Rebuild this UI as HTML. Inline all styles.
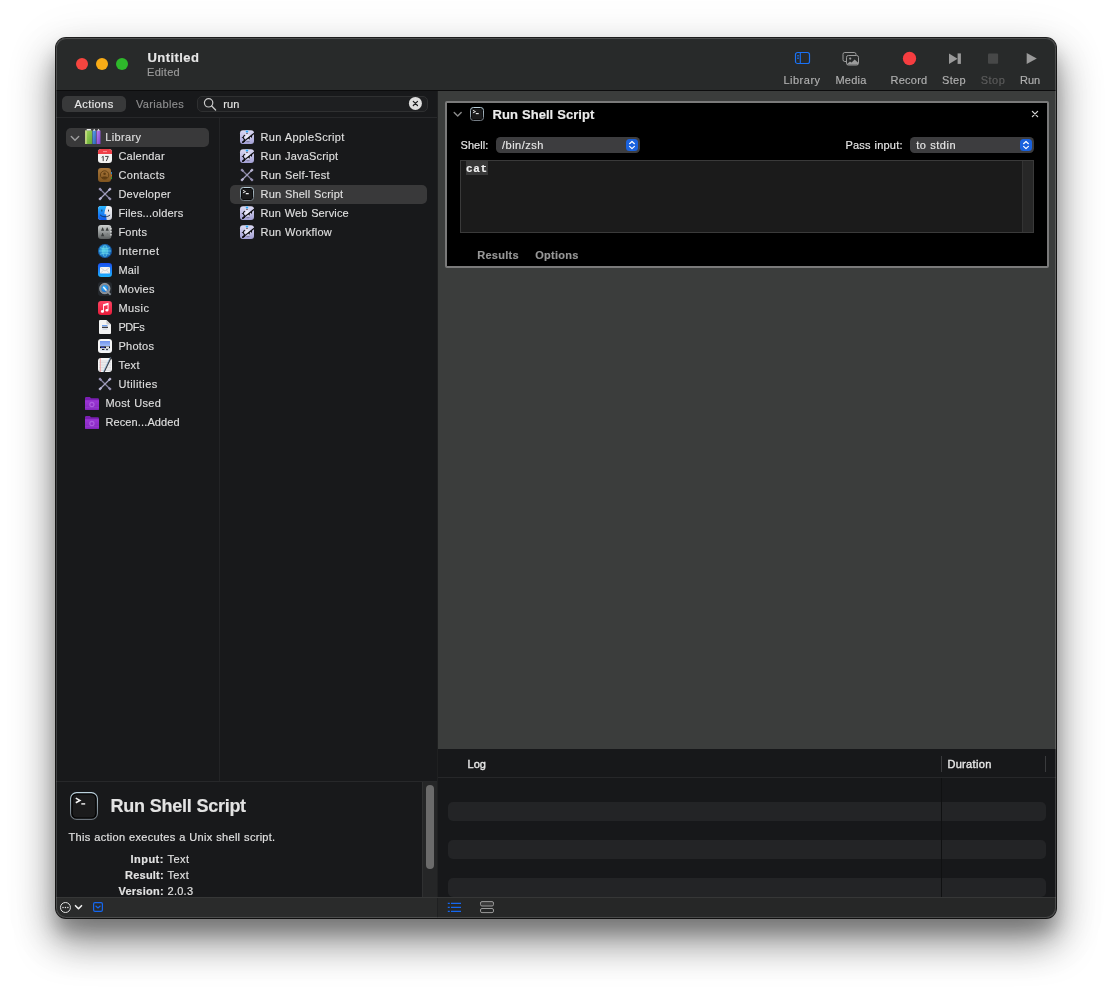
<!DOCTYPE html>
<html>
<head>
<meta charset="utf-8">
<title>Automator</title>
<style>
*{box-sizing:border-box;margin:0;padding:0}
html,body{width:1112px;height:992px;overflow:hidden;background:#fff}
body{font-family:"Liberation Sans",sans-serif;font-size:11px;color:#e2e2e2;position:relative;-webkit-text-stroke:0.16px;word-spacing:0.4px}
.abs{position:absolute}
#win{will-change:transform;position:absolute;left:56px;top:38px;width:1000px;height:880px;border-radius:10px;background:#18191b;overflow:hidden}
#shadow{position:absolute;left:56px;top:38px;width:1000px;height:880px;border-radius:10px;
 box-shadow:0 0 0 1px rgba(0,0,0,.88),0 24px 38px 2px rgba(0,0,0,.38),0 14px 18px rgba(0,0,0,.22),0 12px 50px 8px rgba(0,0,0,.09)}
#win>*{position:absolute}
#win svg{position:absolute;overflow:visible}
.tl{width:12px;height:12px;border-radius:50%;top:20px}
.t{white-space:nowrap;line-height:14px;height:14px}
.tbi{top:35px;text-align:center;color:#b0b0b0;width:60px;margin-left:-30px}
.row{height:19px;border-radius:5px;background:#39393a}
.it{white-space:nowrap;line-height:19px;height:19px;color:#dfdfdf}
.ic{width:14px;height:14px}
.b{font-weight:bold}
svg text{-webkit-text-stroke:0 transparent}
.stripe{left:392px;width:598px;height:19px;border-radius:5px;background:#232426}
.pop{height:16px;border-radius:4.5px;background:#3d3d3f}
.popb{width:12px;height:12px;border-radius:3.5px;background:#1a62de}
</style>
</head>
<body>
<svg width="0" height="0" style="position:absolute;left:0;top:0">
<defs>
<linearGradient id="gGreen" x1="0" y1="0" x2="1" y2="1"><stop offset="0" stop-color="#a5d860"/><stop offset="1" stop-color="#62a733"/></linearGradient>
<linearGradient id="gBlue" x1="0" y1="0" x2="1" y2="1"><stop offset="0" stop-color="#5fa2ea"/><stop offset="1" stop-color="#2b62b4"/></linearGradient>
<linearGradient id="gPurple" x1="0" y1="0" x2="1" y2="1"><stop offset="0" stop-color="#bd85f5"/><stop offset="1" stop-color="#7d3fc8"/></linearGradient>
<linearGradient id="gBrown" x1="0" y1="0" x2="0" y2="1"><stop offset="0" stop-color="#a8763a"/><stop offset="1" stop-color="#80551f"/></linearGradient>
<linearGradient id="gFinder" x1="0" y1="0" x2="0" y2="1"><stop offset="0" stop-color="#2ab6ff"/><stop offset="1" stop-color="#0c58ea"/></linearGradient>
<linearGradient id="gFinderR" x1="0" y1="0" x2="0" y2="1"><stop offset="0" stop-color="#f4f4f8"/><stop offset="1" stop-color="#cfd2dc"/></linearGradient>
<linearGradient id="gFonts" x1="0" y1="0" x2="0" y2="1"><stop offset="0" stop-color="#cdd1d1"/><stop offset="1" stop-color="#5c6060"/></linearGradient>
<radialGradient id="gGlobe" cx="0.45" cy="0.45" r="0.6"><stop offset="0" stop-color="#4fd2e6"/><stop offset="0.6" stop-color="#2487d0"/><stop offset="1" stop-color="#134f9c"/></radialGradient>
<linearGradient id="gMail" x1="0" y1="0" x2="0" y2="1"><stop offset="0" stop-color="#1a4ff0"/><stop offset="1" stop-color="#1fb4ff"/></linearGradient>
<radialGradient id="gQT" cx="0.45" cy="0.4" r="0.6"><stop offset="0" stop-color="#3cc0ff"/><stop offset="1" stop-color="#0e5ccc"/></radialGradient>
<linearGradient id="gMusic" x1="0" y1="0" x2="0" y2="1"><stop offset="0" stop-color="#fc4463"/><stop offset="1" stop-color="#e81c3a"/></linearGradient>
<linearGradient id="gSky" x1="0" y1="0" x2="0" y2="1"><stop offset="0" stop-color="#7193ee"/><stop offset="1" stop-color="#a4c0f8"/></linearGradient>
<linearGradient id="gFolder" x1="0" y1="0" x2="0" y2="1"><stop offset="0" stop-color="#9c36d6"/><stop offset="1" stop-color="#8427bd"/></linearGradient>
<linearGradient id="gAuto" x1="0" y1="0" x2="0" y2="1"><stop offset="0" stop-color="#dcdaf4"/><stop offset="1" stop-color="#a29fd4"/></linearGradient>
<radialGradient id="gGlow" cx="0.5" cy="0.5" r="0.5"><stop offset="0" stop-color="#fff" stop-opacity="0.85"/><stop offset="1" stop-color="#fff" stop-opacity="0"/></radialGradient>
<linearGradient id="gTer" x1="0" y1="0" x2="0" y2="1"><stop offset="0" stop-color="#b8ced9"/><stop offset="1" stop-color="#737b83"/></linearGradient>
<linearGradient id="gTool" x1="0" y1="0" x2="0" y2="1"><stop offset="0" stop-color="#c9c5e2"/><stop offset="1" stop-color="#8f89b8"/></linearGradient>

<!-- library books 16x15 -->
<g id="i-lib">
 <rect x="0.300" y="1.200" width="6.800" height="13.800" fill="url(#gGreen)"/><rect x="0.300" y="1.200" width="1" height="13.800" fill="#f3f5a8"/><rect x="1.500" y="-0.100" width="4.600" height="1.500" rx="0.500" fill="#efefef"/>
 <rect x="7.500" y="1.400" width="3.500" height="13.600" fill="url(#gBlue)"/><path d="M7.900 1.600l1.350-2 1.350 2z" fill="#f2f2f2"/>
 <rect x="11.600" y="1.400" width="4" height="13.600" fill="url(#gPurple)"/><path d="M12.200 1.600l1.400-2 1.400 2z" fill="#f2f2f2"/>
</g>
<!-- calendar -->
<g id="i-cal">
 <rect width="14" height="14" rx="3.2" fill="#f3f3f3"/>
 <path d="M0 3.2A3.2 3.2 0 0 1 3.2 0h7.6A3.2 3.2 0 0 1 14 3.2V5H0z" fill="#ef3f48"/>
 <rect x="5" y="2.2" width="4" height="0.9" fill="#f9a0a4"/>
 <path d="M3.700 8.400L5.200 7.300V12.100M7.100 7.400H10.300L8.300 12.100" fill="none" stroke="#3a3a3a" stroke-width="0.950" stroke-linejoin="round"/>
</g>
<!-- contacts -->
<g id="i-con">
 <rect x="12" y="4" width="1.8" height="2.4" fill="#3aa0f0"/><rect x="12" y="6.4" width="1.8" height="2.4" fill="#f08a20"/><rect x="12" y="8.8" width="1.8" height="2.4" fill="#40b840"/>
 <rect width="13" height="14" rx="3" fill="url(#gBrown)"/>
 <circle cx="6.6" cy="7" r="4.2" fill="none" stroke="#5e3c12" stroke-width="0.9"/>
 <circle cx="6.6" cy="5.8" r="1.3" fill="#5e3c12"/>
 <path d="M3.6 9.6c.6-1.6 5.4-1.6 6 0c-1.4 1.8-4.6 1.8-6 0z" fill="#5e3c12"/>
</g>
<!-- tools X -->
<g id="i-tool" stroke-linecap="round" fill="none">
 <path d="M2.2 2.2L11.8 11.8" stroke="#85819f" stroke-width="1.300"/>
 <path d="M11.8 2.2L2.2 11.8" stroke="#a6a2c2" stroke-width="1.300"/>
 <path d="M1.2 1.2L3.2 3.2M10.8 10.8L12.8 12.8" stroke="#9691b4" stroke-width="2.300" stroke-linecap="butt"/>
 <path d="M12.8 1.2L10.8 3.2M3.2 10.8L1.2 12.8" stroke="#b9b5d2" stroke-width="2.300" stroke-linecap="butt"/>
</g>
<!-- finder -->
<clipPath id="cpR"><rect width="14" height="14" rx="3.2"/></clipPath>
<g id="i-fin" clip-path="url(#cpR)">
 <rect width="14" height="14" fill="url(#gFinderR)"/>
 <path d="M0 0h8.6C7.4 2.6 6.6 5.4 6.4 8.2h1.8c-.1 2 .1 4 .5 5.8H0z" fill="url(#gFinder)"/>
 <rect x="3.4" y="3.4" width="0.9" height="2.2" rx="0.45" fill="#152a4a"/>
 <rect x="10" y="3.4" width="0.9" height="2.2" rx="0.45" fill="#2a2a33"/>
 <path d="M2.4 9.2c2.4 2.2 7 2.2 9.4 0" fill="none" stroke="#152a4a" stroke-width="0.9" stroke-linecap="round"/>
</g>
<!-- fonts (font book) -->
<g id="i-fon">
 <rect width="13.4" height="14" rx="3" fill="url(#gFonts)"/>
 <path d="M13 3v1.6M13 6v1.6M13 9v1.6" stroke="#f0f0f0" stroke-width="1.2"/>
 <g fill="#3a3e3e"><path d="M3 5.8l1.3-3.2h.6l1.3 3.2zM7.6 5.8l1.3-3.2h.6l1.3 3.2zM3 11.2l1.3-3.2h.6l1.3 3.2z"/></g>
 <path d="M7.8 11.2l1.3-3.2h.6l1.3 3.2z" fill="#7a7e7e"/>
</g>
<!-- internet globe -->
<g id="i-int">
 <circle cx="7" cy="7" r="7" fill="url(#gGlobe)"/>
 <path d="M7 .6c-3 2-3 10.800 0 12.800M7 .6c3 2 3 10.800 0 12.800M.8 7h12.400M2 3.600c3 1.600 7 1.600 10 0M2 10.400c3-1.600 7-1.600 10 0" fill="none" stroke="#7fe6f2" stroke-width="0.7" opacity="0.75"/>
 <circle cx="7" cy="7" r="6.6" fill="none" stroke="#0f4488" stroke-width="0.8" opacity="0.6"/>
</g>
<!-- mail -->
<g id="i-mai">
 <rect width="14" height="14" rx="3.2" fill="url(#gMail)"/>
 <rect x="2" y="4" width="10" height="6.6" rx="1" fill="#f4f4f4"/>
 <path d="M2.3 4.4L7 8l4.700-3.600M2.300 10.300L5.600 7.200M11.700 10.300L8.400 7.200" fill="none" stroke="#c4c4c8" stroke-width="0.7"/>
</g>
<!-- quicktime -->
<g id="i-mov">
 <rect width="14" height="14" rx="3.2" fill="#24282d"/>
 <circle cx="6.8" cy="6.600" r="4.500" fill="url(#gQT)" stroke="#858d96" stroke-width="2"/>
 <circle cx="6.800" cy="6.600" r="5.300" fill="none" stroke="#b4bcc4" stroke-width="0.500" opacity="0.700"/>
 <path d="M7.400 7.400L12 12.200" stroke="#8a929b" stroke-width="1.800" stroke-linecap="round"/>
 <path d="M5.600 5.200L8 8" stroke="#e8f4ff" stroke-width="1.5" stroke-linecap="round"/>
</g>
<!-- music -->
<g id="i-mus">
 <rect width="14" height="14" rx="3.2" fill="url(#gMusic)"/>
 <path d="M5.100 3.300l5.400-1.500v7.500a1.600 1.300 0 1 1-0.900-1.200V3.900L6 4.900v5.500a1.600 1.300 0 1 1-0.900-1.200z" fill="#fff"/>
</g>
<!-- pdf doc -->
<g id="i-pdf">
 <path d="M1 1a1 1 0 0 1 1-1h6.400L13 4.400V13a1 1 0 0 1-1 1H2a1 1 0 0 1-1-1z" fill="#f4f4f4"/>
 <path d="M8.400 0L13 4.400H9.400a1 1 0 0 1-1-1z" fill="#c9c9cc"/>
 <rect x="4" y="5.200" width="5.400" height="1.100" fill="#4a8af0"/><rect x="4" y="6.800" width="6" height="1.100" fill="#2a2a30"/><rect x="4.400" y="8.600" width="5" height="0.900" fill="#b8c4d8"/>
</g>
<!-- photos (preview) -->
<g id="i-pho">
 <rect width="14" height="14" rx="3" fill="#f6f6f6"/>
 <rect x="2" y="2" width="10" height="5.600" fill="url(#gSky)"/>
 <rect x="2" y="7.400" width="10" height="2" fill="#0c0c10"/>
 <rect x="2" y="9.400" width="10" height="2.400" fill="#dfe6f2"/>
 <rect x="3" y="7.800" width="3.600" height="1.200" fill="#2a38a8"/><rect x="8" y="7.600" width="3" height="1.300" fill="#fff"/>
 <rect x="4" y="10" width="2.400" height="1" fill="#20242c"/><rect x="8" y="10.200" width="2" height="0.900" fill="#20242c"/>
</g>
<!-- text edit -->
<g id="i-tex">
 <rect width="14" height="14" rx="3" fill="#f6f6f6"/>
 <path d="M1 3h12M1 4.600h12M1 6.200h12M1 7.800h12M1 9.400h12M1 11h12M1 12.500h12" stroke="#c4c4cc" stroke-width="0.550"/>
 <path d="M2.400 0v14" stroke="#f08080" stroke-width="0.6"/>
 <path d="M13-0.600L6 14" stroke="#34343a" stroke-width="1.400"/>
 <path d="M12.200-0.500L5.300 13.800" stroke="#9cccf4" stroke-width="0.700"/>
</g>
<!-- purple smart folder 14x13 -->
<g id="i-fol">
 <path d="M0 1.200A1.200 1.200 0 0 1 1.200 0h3.600l1.200 1.300h6.800A1.200 1.200 0 0 1 14 2.500V12a1 1 0 0 1-1 1H1a1 1 0 0 1-1-1z" fill="#7a1fb2"/>
 <path d="M0 3.200h14V12a1 1 0 0 1-1 1H1a1 1 0 0 1-1-1z" fill="url(#gFolder)"/>
 <circle cx="6.900" cy="7.500" r="2.100" fill="none" stroke="#ad5ee0" stroke-width="1.150"/>
 <path d="M0 10.800h14" stroke="#a044d6" stroke-width="0.600"/>
</g>
<!-- automator script icon -->
<g id="i-aut">
 <rect y="0.300" width="14" height="13.700" rx="3" fill="url(#gAuto)"/>
 <ellipse cx="7.200" cy="7" rx="4.600" ry="5" fill="url(#gGlow)"/>
 <ellipse cx="7" cy="1.500" rx="1.700" ry="1.300" fill="#f0f0fa"/>
 <ellipse cx="7" cy="1.500" rx="1.400" ry="1" fill="#1e96f4"/>
 <ellipse cx="7" cy="1.900" rx="0.900" ry="0.450" fill="#62d4fa"/>
 <circle cx="7" cy="3.300" r="0.650" fill="#360a0e"/>
 <path d="M4.700 5.300C3.500 5.600 4 6.900 2.900 7.400C3.900 7.800 3.400 9 4.500 9.500" fill="none" stroke="#0a0a0c" stroke-width="1.150" stroke-linecap="round"/>
 <path d="M2.900 12.100L13.900 3.500" stroke="#0a0a0c" stroke-width="1.150" stroke-linecap="round"/>
 <path d="M2.900 12.100L4.300 11" stroke="#0a0a0c" stroke-width="1.800" stroke-linecap="round"/>
 <path d="M8 8.200l1.600 1.500.3-3zM10.300 6.400l1.600 1.500.3-3z" fill="#0a0a0c"/>
 <ellipse cx="8" cy="11.600" rx="1.900" ry="0.550" fill="#7f7d9f"/>
</g>
<!-- terminal icon -->
<g id="i-ter">
 <rect x="0.500" y="0.500" width="13" height="13" rx="2.900" fill="#050506" stroke="url(#gTer)" stroke-width="1"/>
 <rect x="1.700" y="1.700" width="10.600" height="10.600" rx="1.900" fill="#1a1a1b"/>
 <path d="M2.900 3.300l2.600 1.300-2.600 1.300" fill="none" stroke="#f4f4f4" stroke-width="0.900"/>
 <path d="M5.800 6.600h2.900" stroke="#f4f4f4" stroke-width="1.100"/>
</g>
</defs>
</svg>

<div id="shadow"></div>
<div id="win">
  <!-- title bar -->
  <div style="left:0;top:0;width:1000px;height:52px;background:#282a2a"></div>
  <div style="left:0;top:52px;width:1000px;height:1px;background:#0c0c0d"></div>
  <div class="tl" style="left:20px;background:#f6453f"></div>
  <div class="tl" style="left:40px;background:#f9ac16"></div>
  <div class="tl" style="left:60px;background:#2eb82b"></div>
  <div class="t b" id="t_untitled" style="letter-spacing:0.43px;left:91.5px;top:12.6px;font-size:13px;color:#e6e6e6">Untitled</div>
  <div class="t" id="t_edited" style="letter-spacing:0.30px;left:91px;top:27px;color:#9b9b9b">Edited</div>

  <div class="t tbi" id="t_tlib" style="letter-spacing:0.51px;left:746px">Library</div>
  <div class="t tbi" id="t_tmedia" style="letter-spacing:0.21px;left:795px">Media</div>
  <div class="t tbi" id="t_trec" style="letter-spacing:0.25px;left:853px">Record</div>
  <div class="t tbi" id="t_tstep" style="letter-spacing:0.29px;left:898px">Step</div>
  <div class="t tbi" id="t_tstop" style="letter-spacing:0.45px;left:937px;color:#5d5d5d">Stop</div>
  <div class="t tbi" id="t_trun" style="letter-spacing:-0.09px;left:974px">Run</div>
  
<svg style="left:738px;top:13px" width="17" height="14" viewBox="0 0 17 14"><rect x="1.500" y="1.500" width="14" height="11" rx="2.100" fill="none" stroke="#1a72f6" stroke-width="1.200"/><path d="M6.300 1.500v11" stroke="#1a72f6" stroke-width="1.100"/><path d="M3.200 4.500h1.600M3.200 6h1.600M3.200 7.500h1.600" stroke="#1a72f6" stroke-width="0.900"/></svg>
<svg style="left:786px;top:13px" width="18" height="15" viewBox="0 0 18 15"><path d="M4 10.500H2.800A1.800 1.800 0 0 1 1 8.700V3.300A1.800 1.800 0 0 1 2.800 1.500h9.400A1.800 1.800 0 0 1 14 3.300V4" fill="none" stroke="#9b9b9b" stroke-width="1"/><rect x="4.500" y="4.500" width="12" height="9.500" rx="1.800" fill="#282a2a" stroke="#9b9b9b" stroke-width="1"/><circle cx="8.200" cy="7.600" r="1.100" fill="#9b9b9b"/><path d="M5 13l3-2.600 1.600 1.200 3-3.200L16 11.500V13.500H5z" fill="#9b9b9b"/></svg>
<svg style="left:846px;top:13px" width="15" height="15" viewBox="0 0 15 15"><circle cx="7.500" cy="7.500" r="6.650" fill="#f63d40"/></svg>
<svg style="left:892px;top:14px" width="14" height="13" viewBox="0 0 14 13"><path d="M1 1.400L9.600 6.650L1 11.900z" fill="#9a9a9a"/><rect x="9.600" y="1.400" width="3.300" height="10.500" fill="#9a9a9a"/></svg>
<svg style="left:931px;top:14px" width="12" height="13" viewBox="0 0 12 13"><rect x="1" y="1.600" width="10.100" height="10.100" rx="1" fill="#474848"/></svg>
<svg style="left:969px;top:14px" width="13" height="13" viewBox="0 0 13 13"><path d="M1.700 0.900L11.800 6.500L1.700 12.100z" fill="#9a9a9a"/></svg>


  <!-- left panel -->
  <div style="left:0;top:53px;width:381px;height:827px;background:#18191b"></div>
  <!-- segmented + search -->
  <div style="left:6px;top:58px;width:64px;height:16px;border-radius:5px;background:#38393a"></div>
  <div class="t" id="t_actions" style="letter-spacing:0.44px;left:6px;width:64px;text-align:center;top:59px;color:#e8e8e8">Actions</div>
  <div class="t" id="t_variables" style="letter-spacing:0.33px;left:72px;width:64px;text-align:center;top:59px;color:#8d8d8e">Variables</div>
  <div style="left:141px;top:58px;width:231px;height:16px;border-radius:5px;background:#1e1f21;border:1px solid #2f3031"></div>
  <div class="t" id="t_run" style="letter-spacing:0.20px;left:167.2px;top:59px;color:#e4e4e4">run</div>
  
<svg style="left:147px;top:59px" width="14" height="14" viewBox="0 0 14 14"><circle cx="5.600" cy="5.800" r="4.200" fill="none" stroke="#c8c8c8" stroke-width="1.200"/><path d="M8.700 9L12.600 13" stroke="#c8c8c8" stroke-width="1.300" stroke-linecap="round"/></svg>
<svg style="left:352px;top:59px" width="14" height="14" viewBox="0 0 14 14"><circle cx="7.400" cy="6.400" r="6.500" fill="#dedede"/><path d="M5.300 4.300L9.500 8.500M9.500 4.300L5.300 8.500" stroke="#1c1d1f" stroke-width="1.200" stroke-linecap="round"/></svg>

  <div style="left:0;top:79px;width:381px;height:1px;background:#27282a"></div>
  <div style="left:163px;top:80px;width:1px;height:663px;background:#232426"></div>

  <!-- sidebar -->
  <div class="row" style="left:10px;top:90px;width:143px"></div>
  <div class="it" id="t_library" style="letter-spacing:0.35px;left:49.3px;top:90px">Library</div>
  <div class="it" id="s0" style="letter-spacing:0.22px;left:62.4px;top:109px">Calendar</div>
  <div class="it" id="s1" style="letter-spacing:0.41px;left:62.4px;top:128px">Contacts</div>
  <div class="it" id="s2" style="letter-spacing:0.27px;left:62.4px;top:147px">Developer</div>
  <div class="it" id="s3" style="letter-spacing:0.19px;left:62.4px;top:166px">Files...olders</div>
  <div class="it" id="s4" style="letter-spacing:0.25px;left:62.4px;top:185px">Fonts</div>
  <div class="it" id="s5" style="letter-spacing:0.47px;left:62.4px;top:204px">Internet</div>
  <div class="it" id="s6" style="letter-spacing:0.18px;left:62.4px;top:223px">Mail</div>
  <div class="it" id="s7" style="letter-spacing:0.23px;left:62.4px;top:242px">Movies</div>
  <div class="it" id="s8" style="letter-spacing:0.44px;left:62.4px;top:261px">Music</div>
  <div class="it" id="s9" style="letter-spacing:-0.40px;left:62.4px;top:280px">PDFs</div>
  <div class="it" id="s10" style="letter-spacing:0.27px;left:62.4px;top:299px">Photos</div>
  <div class="it" id="s11" style="letter-spacing:0.30px;left:62.4px;top:318px">Text</div>
  <div class="it" id="s12" style="letter-spacing:0.42px;left:62.4px;top:337px">Utilities</div>
  <div class="it" id="s13" style="letter-spacing:0.30px;left:49.4px;top:356px">Most Used</div>
  <div class="it" id="s14" style="letter-spacing:0.13px;left:49.4px;top:375px">Recen...Added</div>
  <svg style="left:14px;top:97px" width="10" height="7" viewBox="0 0 10 7"><path d="M1.300 1.400L5 5.200L8.700 1.400" fill="none" stroke="#9d9d9e" stroke-width="1.400" stroke-linecap="round" stroke-linejoin="round"/></svg>
<svg style="left:28.5px;top:91.2px" width="15.5" height="15" viewBox="0 -0.200 15.500 15.200"><use href="#i-lib"/></svg>
<svg style="left:42px;top:111px" width="14" height="14" viewBox="0 0 14 14"><use href="#i-cal"/></svg>
<svg style="left:42px;top:130px" width="14" height="14" viewBox="0 0 14 14"><use href="#i-con"/></svg>
<svg style="left:42px;top:149px" width="14" height="14" viewBox="0 0 14 14"><use href="#i-tool"/></svg>
<svg style="left:42px;top:168px" width="14" height="14" viewBox="0 0 14 14"><use href="#i-fin"/></svg>
<svg style="left:42px;top:187px" width="14" height="14" viewBox="0 0 14 14"><use href="#i-fon"/></svg>
<svg style="left:42px;top:206px" width="14" height="14" viewBox="0 0 14 14"><use href="#i-int"/></svg>
<svg style="left:42px;top:225px" width="14" height="14" viewBox="0 0 14 14"><use href="#i-mai"/></svg>
<svg style="left:42px;top:244px" width="14" height="14" viewBox="0 0 14 14"><use href="#i-mov"/></svg>
<svg style="left:42px;top:263px" width="14" height="14" viewBox="0 0 14 14"><use href="#i-mus"/></svg>
<svg style="left:42px;top:282px" width="14" height="14" viewBox="0 0 14 14"><use href="#i-pdf"/></svg>
<svg style="left:42px;top:301px" width="14" height="14" viewBox="0 0 14 14"><use href="#i-pho"/></svg>
<svg style="left:42px;top:320px" width="14" height="14" viewBox="0 0 14 14"><use href="#i-tex"/></svg>
<svg style="left:42px;top:339px" width="14" height="14" viewBox="0 0 14 14"><use href="#i-tool"/></svg>
<svg style="left:29px;top:359px" width="14" height="13" viewBox="0 0 14 13"><use href="#i-fol"/></svg>
<svg style="left:29px;top:378px" width="14" height="13" viewBox="0 0 14 13"><use href="#i-fol"/></svg>

  <!-- actions list -->
  <div class="row" style="left:174px;top:147px;width:197px"></div>
  <div class="it" id="a0" style="letter-spacing:0.32px;left:204.5px;top:90px">Run AppleScript</div>
  <div class="it" id="a1" style="letter-spacing:0.20px;left:204.5px;top:109px">Run JavaScript</div>
  <div class="it" id="a2" style="letter-spacing:0.21px;left:204.5px;top:128px">Run Self-Test</div>
  <div class="it" id="a3" style="letter-spacing:0.19px;left:204.5px;top:147px">Run Shell Script</div>
  <div class="it" id="a4" style="letter-spacing:0.14px;left:204.5px;top:166px">Run Web Service</div>
  <div class="it" id="a5" style="letter-spacing:0.24px;left:204.5px;top:185px">Run Workflow</div>
  <svg style="left:184px;top:92px" width="14" height="14" viewBox="0 0 14 14"><use href="#i-aut"/></svg>
<svg style="left:184px;top:111px" width="14" height="14" viewBox="0 0 14 14"><use href="#i-aut"/></svg>
<svg style="left:184px;top:130px" width="14" height="14" viewBox="0 0 14 14"><use href="#i-tool"/></svg>
<svg style="left:184px;top:149px" width="14" height="14" viewBox="0 0 14 14"><use href="#i-ter"/></svg>
<svg style="left:184px;top:168px" width="14" height="14" viewBox="0 0 14 14"><use href="#i-aut"/></svg>
<svg style="left:184px;top:187px" width="14" height="14" viewBox="0 0 14 14"><use href="#i-aut"/></svg>

  <!-- description panel -->
  <div style="left:0;top:743px;width:381px;height:1px;background:#27282a"></div>
  <div style="left:366px;top:744px;width:15px;height:115px;background:#252627;border-left:1px solid #2f3031"></div>
  <div style="left:370px;top:747px;width:8px;height:84px;border-radius:4px;background:#6b6b6b"></div>
  <div class="t b" id="t_dtitle" style="letter-spacing:-0.28px;left:54.5px;top:757.3px;font-size:18px;line-height:22px;height:22px;color:#e3e3e3">Run Shell Script</div>
  <div class="t" id="t_desc" style="letter-spacing:0.29px;left:12.6px;top:792px">This action executes a Unix shell script.</div>
  <div class="t b" id="t_input" style="letter-spacing:0.45px;left:0;width:107.8px;text-align:right;top:814px">Input:</div>
  <div class="t" id="t_input2" style="letter-spacing:0.44px;left:111.5px;top:814px">Text</div>
  <div class="t b" id="t_result" style="letter-spacing:0.20px;left:0;width:107.8px;text-align:right;top:830px">Result:</div>
  <div class="t" id="t_result2" style="letter-spacing:0.34px;left:111.5px;top:830px">Text</div>
  <div class="t b" id="t_version" style="letter-spacing:0.23px;left:0;width:107.8px;text-align:right;top:846px">Version:</div>
  <div class="t" id="t_version2" style="letter-spacing:0.26px;left:111.5px;top:846px">2.0.3</div>
  <svg style="left:14px;top:754px" width="28" height="28" viewBox="0 0 14 14"><defs><linearGradient id="gTB" x1="0" y1="0" x2="0" y2="1"><stop offset="0" stop-color="#bcd2de"/><stop offset="1" stop-color="#6a727a"/></linearGradient></defs><rect x="0.300" y="0.300" width="13.400" height="13.400" rx="3" fill="#000" stroke="url(#gTB)" stroke-width="0.550"/><rect x="1.300" y="1.300" width="11.400" height="11.400" rx="2.100" fill="#1b1b1c"/><path d="M2.900 3.050L4.950 4.200L2.900 5.350" fill="none" stroke="#f6f6f6" stroke-width="0.780"/><path d="M5.650 5.950H7.600" stroke="#f6f6f6" stroke-width="0.700"/></svg>

  <!-- divider -->
  <div style="left:381px;top:53px;width:1px;height:827px;background:#1f2021"></div>

  <!-- workflow area -->
  <div style="left:382px;top:53px;width:618px;height:658px;background:#3b3d3c"></div>
  <div style="left:389px;top:63px;width:604px;height:167px;background:#000;border:2px solid #7a7a7a;border-radius:2px"></div>
  <div class="t b" id="t_ctitle" style="letter-spacing:0.03px;left:436.6px;top:69px;font-size:13px;line-height:16px;height:16px;color:#ececec">Run Shell Script</div>
  <div class="t" id="t_shell" style="letter-spacing:0.07px;left:404.5px;top:100px;color:#e6e6e6">Shell:</div>
  <div class="pop" style="left:440px;top:99px;width:144px"></div>
  <div class="popb" style="left:570px;top:101px"></div>
  <div class="t" id="t_zsh" style="letter-spacing:0.50px;left:446px;top:100px;color:#e6e6e6">/bin/zsh</div>
  <div class="t" id="t_pass" style="letter-spacing:0.23px;left:789.4px;top:100px;color:#e6e6e6">Pass input:</div>
  <div class="pop" style="left:854px;top:99px;width:124px"></div>
  <div class="popb" style="left:964px;top:101px"></div>
  <div class="t" id="t_stdin" style="letter-spacing:0.50px;left:860.2px;top:100px;color:#e6e6e6">to stdin</div>
  <div style="left:404px;top:122px;width:574px;height:73px;background:#1b1b1b;border:1px solid #3a3a3a"></div>
  <div style="left:966px;top:123px;width:11px;height:71px;background:#272727;border-left:1px solid #333"></div>
  <div style="left:410px;top:123px;width:22px;height:14px;background:#393939"></div>
  <div class="t b" id="t_cat" style="left:410px;top:124px;font-family:'Liberation Mono',monospace;font-size:11px;letter-spacing:0.6px;color:#f0f0f0">cat</div>
  <div class="t b" id="t_results" style="letter-spacing:0.28px;left:421.2px;top:210px;color:#979797">Results</div>
  <div class="t b" id="t_options" style="letter-spacing:0.26px;left:479.3px;top:210px;color:#979797">Options</div>
  
<svg style="left:397px;top:73px" width="10" height="7" viewBox="0 0 10 7"><path d="M1.200 1.400L4.700 5L8.200 1.400" fill="none" stroke="#8a8a8a" stroke-width="1.400" stroke-linecap="round" stroke-linejoin="round"/></svg>
<svg style="left:414px;top:69px" width="14" height="14" viewBox="0 0 14 14"><use href="#i-ter"/></svg>
<svg style="left:975px;top:72px" width="8" height="8" viewBox="0 0 8 8"><path d="M1.400 1.400L6.600 6.600M6.600 1.400L1.400 6.600" stroke="#d4d4d4" stroke-width="1.300" stroke-linecap="round"/></svg>
<svg style="left:570px;top:101px" width="12" height="12" viewBox="0 0 12 12"><path d="M3.600 4.700L6 2.500L8.400 4.700M3.600 7.400L6 9.600L8.400 7.400" fill="none" stroke="#fff" stroke-width="1.200" stroke-linecap="round" stroke-linejoin="round"/></svg>
<svg style="left:964px;top:101px" width="12" height="12" viewBox="0 0 12 12"><path d="M3.600 4.700L6 2.500L8.400 4.700M3.600 7.400L6 9.600L8.400 7.400" fill="none" stroke="#fff" stroke-width="1.200" stroke-linecap="round" stroke-linejoin="round"/></svg>


  <!-- log area -->
  <div style="left:382px;top:711px;width:618px;height:148px;background:#17181a"></div>
  <div style="left:382px;top:739px;width:618px;height:1px;background:#262729"></div>
  <div class="t" id="t_log" style="letter-spacing:0.02px;left:411.6px;top:719px;color:#e8e8e8;-webkit-text-stroke:0.35px #e8e8e8">Log</div>
  <div class="t" id="t_duration" style="letter-spacing:0.33px;left:891.4px;top:719px;color:#e8e8e8;-webkit-text-stroke:0.35px #e8e8e8">Duration</div>
  <div style="left:885px;top:718px;width:1px;height:16px;background:#3a3b3d"></div>
  <div style="left:989px;top:718px;width:1px;height:16px;background:#3a3b3d"></div>
  <div class="stripe" style="top:764px"></div>
  <div class="stripe" style="top:802px"></div>
  <div class="stripe" style="top:840px"></div>
  <div style="left:885px;top:740px;width:1px;height:119px;background:#101112"></div>

  <!-- bottom bar -->
  <div style="left:0;top:859px;width:381px;height:21px;background:#2a2b2b"></div>
  <div style="left:382px;top:859px;width:618px;height:21px;background:#262727"></div>
  <div style="left:0;top:859px;width:1000px;height:1px;background:#363737"></div>
  
<svg style="left:3px;top:863px" width="13" height="13" viewBox="0 0 13 13"><circle cx="6.450" cy="6.500" r="5" fill="none" stroke="#e4e4e4" stroke-width="1"/><circle cx="4" cy="6.500" r="0.750" fill="#e4e4e4"/><circle cx="6.450" cy="6.500" r="0.750" fill="#e4e4e4"/><circle cx="8.900" cy="6.500" r="0.750" fill="#e4e4e4"/></svg>
<svg style="left:18px;top:866px" width="9" height="7" viewBox="0 0 9 7"><path d="M1.500 1.700L4.500 4.700L7.500 1.700" fill="none" stroke="#f0f0f0" stroke-width="1.600" stroke-linecap="round" stroke-linejoin="round"/></svg>
<svg style="left:36px;top:863px" width="12" height="12" viewBox="0 0 12 12"><rect x="1.600" y="1.600" width="8.800" height="8.800" rx="1.400" fill="none" stroke="#1567f0" stroke-width="1.200"/><path d="M3.800 5L6 7L8.200 5" fill="none" stroke="#1567f0" stroke-width="1.100" stroke-linecap="round" stroke-linejoin="round"/></svg>
<svg style="left:391px;top:863px" width="15" height="13" viewBox="0 0 15 13"><path d="M0.800 2.400h2M4 2.400h10M0.800 6.400h2M4 6.400h10M0.800 10.400h2M4 10.400h10" stroke="#1567f0" stroke-width="1.300"/></svg>
<svg style="left:423px;top:862px" width="16" height="15" viewBox="0 0 16 15"><rect x="1.500" y="1.600" width="13" height="4.400" rx="1.500" fill="#3a3a3a" stroke="#9a9a9a" stroke-width="1"/><rect x="1.500" y="8.500" width="13" height="4.100" rx="1.500" fill="none" stroke="#9a9a9a" stroke-width="1"/></svg>

  <div style="left:0;top:0;width:1000px;height:880px;border-radius:10px;box-shadow:inset 0 0 0 1px rgba(255,255,255,.17)"></div>
</div>
</body>
</html>
